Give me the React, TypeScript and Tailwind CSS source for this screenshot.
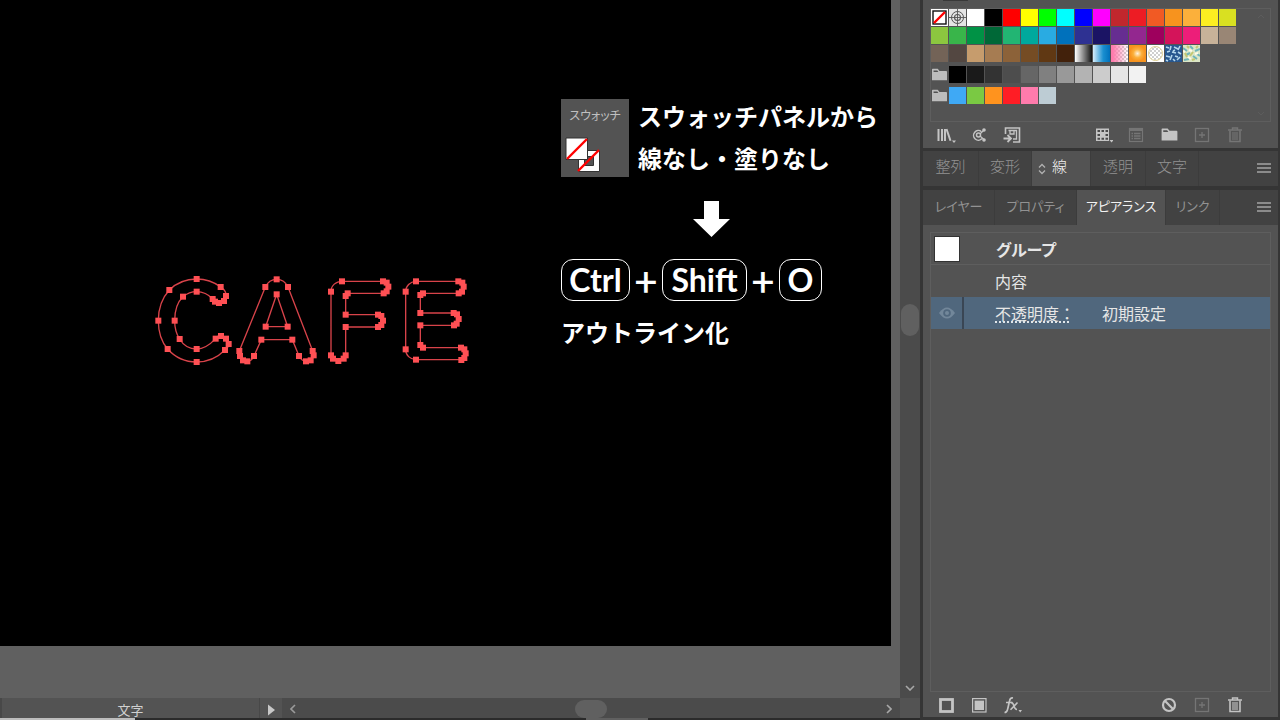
import React, { useState } from 'react';
import { clsx } from 'clsx';

const JP = "font-['Noto_Sans_CJK_JP',sans-serif]";

type Pt = [number, number];

// outlines and anchor points, drawn at 3 units per pixel
const OUTLINES = [
  'M140 27C167 27 192 36 212 51C224 58 230 70 228 78C228 88 222 96 207 99C200 100 194 92 188 87C175 73 160 65 140 65C124 65 110 71 99 80C80 98 74 124 74 152C74 174 79 192 89 207C100 226 118 237 140 237C164 237 182 222 197 206C200 199 207 197 213 198C228 202 238 210 236 222C236 230 231 236 225 240C202 263 174 276 140 276C105 276 75 262 53 237C34 215 25 186 25 152C25 116 36 84 58 60C80 38 107 27 140 27Z',
  'M380 28C364 28 353 36 346 51L268 243C264 258 270 272 292 274C302 274 308 267 312 258L334 209H427L447 258C452 267 458 274 468 274C488 272 496 258 488 243L414 51C407 36 396 28 380 28Z',
  'M380 73L347 170H413Z',
  'M576 34H698C722 36 722 68 698 70H602C592 70 587 70 587 79V134H684C704 137 704 169 684 171H587V256C585 278 545 278 543 256V65C543 46 558 34 576 34Z',
  'M798 34H927C947 37 947 67 927 70H819C814 70 811 70 811 76V129H912C932 132 932 163 912 166H811V225C811 231 814 233 819 233H935C953 236 953 267 934 269H798C780 268 767 256 767 238V65C767 48 780 35 798 34Z',
];

const ANCHORS: Pt[] = [
  [140, 27], [212, 51], [228, 78], [222, 93], [207, 99], [195, 95], [188, 87], [140, 65], [99, 80], [74, 152], [89, 207],
  [140, 237], [197, 206], [213, 198], [228, 206], [236, 222], [225, 240], [140, 276], [53, 237], [25, 152], [58, 60],
  [380, 28], [346, 51], [414, 51], [380, 73], [347, 170], [413, 170], [334, 209], [427, 209],
  [268, 243], [270, 258], [279, 271], [292, 274], [312, 258], [447, 258], [468, 274], [482, 271], [491, 256], [488, 243],
  [576, 34], [543, 65], [699, 34], [710, 38], [715, 50], [710, 64], [701, 70], [593, 70], [587, 78], [587, 134],
  [684, 134], [694, 138], [699, 152], [694, 165], [684, 171], [587, 171], [587, 256], [581, 266], [565, 273], [549, 266], [543, 256],
  [798, 34], [767, 65], [925, 34], [937, 38], [941, 50], [936, 65], [926, 70], [819, 70], [811, 75], [811, 129],
  [911, 129], [921, 133], [926, 147], [920, 161], [912, 166], [811, 166], [811, 225], [819, 233],
  [933, 233], [943, 238], [947, 250], [943, 264], [934, 270], [798, 269], [767, 238],
];

const ROW_1 = [
  'none', 'registration', '#ffffff', '#000000', '#ff0000', '#ffff00', '#00ff00', '#00ffff', '#0000ff', '#ff00ff',
  '#c1272d', '#ed1c24', '#f15a24', '#f7931e', '#fbb03b', '#fcee21', '#d9e021',
];
const ROW_2 = [
  '#8cc63f', '#39b54a', '#009245', '#006837', '#22b573', '#00a99d', '#29abe2', '#0071bc', '#2e3192', '#1b1464',
  '#662d91', '#93278f', '#9e005d', '#d4145a', '#ed1e79', '#c7b299', '#998675',
];
const ROW_3 = [
  '#736357', '#534741', '#c69c6d', '#a67c52', '#8c6239', '#754c24', '#603813', '#42210b',
  'linear-gradient(90deg,#fff,#111)', 'linear-gradient(90deg,#d5ecfa,#1a8fd0 60%,#0071bc)', 'fade',
  'radial-gradient(circle,#fff3dc,#fbb03b 35%,#f7931e 65%)', 'ring', 'leaves', 'flowers',
];
const GRAYS = ['#000000', '#1a1a1a', '#333333', '#4d4d4d', '#666666', '#808080', '#999999', '#b3b3b3', '#cccccc', '#e6e6e6', '#f2f2f2'];
const BRIGHTS = ['#3fa9f5', '#7ac943', '#ff931e', '#ff1d25', '#ff7bac', '#bdccd4'];

const Checker: React.FC = () => (
  <>
    {Array.from({ length: 64 }, (_, i) => {
      const x = i % 8;
      const y = Math.floor(i / 8);
      return (x + y) % 2 ? <rect key={i} x={x * 2 + 1} y={y * 2 + 1} width="2" height="2" fill="#cfcfcf" /> : null;
    })}
  </>
);

const SwatchArt: React.FC<{ kind: string }> = ({ kind }) => (
  <svg viewBox="0 0 17 17" className="block size-full">
    {kind === 'none' && (
      <>
        <rect width="17" height="17" fill="#fff" />
        <rect x="2" y="2" width="13" height="13" fill="#fff" stroke="#111" strokeWidth="1.4" />
        <path d="M3 14L14 3" stroke="#f00" strokeWidth="2.4" />
      </>
    )}
    {kind === 'registration' && (
      <>
        <rect width="17" height="17" fill="#e4e4e4" />
        <g fill="none" stroke="#555">
          <circle cx="8.5" cy="8.5" r="6" strokeWidth="1" />
          <circle cx="8.5" cy="8.5" r="3" strokeWidth="1.1" />
          <path d="M8.5 0V17M0 8.5H17" strokeWidth="0.9" />
        </g>
      </>
    )}
    {kind === 'fade' && (
      <>
        <defs>
          <linearGradient id="pinkFade">
            <stop offset="0.1" stopColor="#ff7bac" />
            <stop offset="1" stopColor="#ff7bac" stopOpacity="0" />
          </linearGradient>
        </defs>
        <rect width="17" height="17" fill="#fff" />
        <Checker />
        <rect width="17" height="17" fill="url(#pinkFade)" />
      </>
    )}
    {kind === 'ring' && (
      <>
        <rect width="17" height="17" fill="#fff" />
        <Checker />
        <path fill="#fff" fillRule="evenodd" d="M0 0H17V17H0ZM8.5 1.5A7 7 0 1 0 8.5 15.5A7 7 0 1 0 8.5 1.5Z" />
        <circle cx="8.5" cy="8.5" r="7" fill="none" stroke="#e0d08c" strokeWidth="1" />
      </>
    )}
    {kind === 'leaves' && (
      <>
        <rect width="17" height="17" fill="#27578f" />
        <path
          d="M1 2l3 1M6 1l-1 4M9 2l4 2M15 1l-2 4M2 7l3-1M7 7l4 1M13 7l3 2M1 11l4 1M7 10l-2 5M10 11l3 1M15 12l-3 3M8 14l2 2M1 15l2 1M10 5l-2 1"
          stroke="#b4d7ec"
          strokeWidth="1.6"
        />
      </>
    )}
    {kind === 'flowers' && (
      <>
        <rect width="17" height="17" fill="#dce6c6" />
        <path d="M0 3l4 3M7 1l3 3M12 6l5-2M3 10l4-2M10 11l4 3M1 15l5-1M14 9l3 2" stroke="#6fb5b9" strokeWidth="2" />
        <path d="M4 1l2 2M10 7l-3 4M15 1l-2 2M2 8l2 4M9 15l3-1" stroke="#c3c873" strokeWidth="2" />
        <path d="M6 5l3 1M12 9l3-1M5 12l3 2M0 6l2 1" stroke="#fffbe8" strokeWidth="2" />
      </>
    )}
  </svg>
);

const Swatch: React.FC<{ fill: string }> = ({ fill }) => {
  const plain = fill.startsWith('#') || fill.includes('gradient');
  return (
    <button aria-label={fill} className="size-[17px] shrink-0" style={plain ? { background: fill } : undefined}>
      {!plain && <SwatchArt kind={fill} />}
    </button>
  );
};

const Folder: React.FC<{ className: string }> = ({ className }) => (
  <svg viewBox="0 0 17 14" className={className} fill="currentColor">
    <path d="M0 1.2Q0 .5 .8 .5H6.5L8.5 3H16Q17 3 17 4V13.5H0Z" />
    <path d="M1.8 2.5H6L7.2 4.2H1.8Z" fill="#535353" />
  </svg>
);

const SwatchRow: React.FC<{ items: string[]; folder?: boolean }> = ({ items, folder }) => (
  <div className="flex gap-px items-center">
    {folder && (
      <button aria-label="folder" className="grid place-items-center size-[17px]">
        <Folder className="w-[15px] h-[13px] text-[#bdbdbd]" />
      </button>
    )}
    {items.map((fill) => (
      <Swatch key={fill} fill={fill} />
    ))}
  </div>
);

const IconButton: React.FC<{ label: string; dim?: boolean; children: React.ReactNode }> = ({ label, dim, children }) => (
  <button aria-label={label} className={clsx('block size-5 shrink-0', dim ? 'text-[#757575]' : 'text-[#c4c4c4]')}>
    <svg viewBox="0 0 20 20" className="block size-5" fill="none" stroke="currentColor">
      {children}
    </svg>
  </button>
);

const TrashArt = () => (
  <>
    <path d="M3 5H17M7.500 5V3H12.500V5" strokeWidth="1.400" />
    <path d="M5 5.500V16.500H15V5.500" strokeWidth="1.600" />
    <path d="M8 7V15M10 7V15M12 7V15" strokeWidth="1.100" />
  </>
);

const PlusArt = () => (
  <>
    <rect x="3.500" y="3.500" width="13" height="13" strokeWidth="1.300" />
    <path d="M10 7V13M7 10H13" strokeWidth="1.300" />
  </>
);

const TabBar: React.FC<{
  tabs: { name: string; width: string }[];
  initial: string;
  textSize: string;
  sortable?: boolean;
}> = ({ tabs, initial, textSize, sortable }) => {
  const [active, setActive] = useState(initial);
  return (
    <div className="flex h-[35px] bg-[#424242]">
      {tabs.map(({ name, width }) => (
        <button
          key={name}
          onClick={() => setActive(name)}
          className={clsx(
            'flex items-center justify-center gap-[6px] pb-1 border-r border-[#3c3c3c] whitespace-nowrap [font-feature-settings:"palt"]',
            width,
            textSize,
            active === name ? 'bg-[#535353] text-[#f2f2f2]' : 'text-[#929292]',
          )}
        >
          {sortable && active === name && (
            <svg viewBox="0 0 8 12" className="w-2 h-3 mt-1" fill="none" stroke="#b0b0b0" strokeWidth="1.300">
              <path d="M1 4.500L4 1.500L7 4.500M1 7.500L4 10.500L7 7.500" />
            </svg>
          )}
          {name}
        </button>
      ))}
      <button aria-label="menu" className="ml-auto mr-[7px] pb-px self-center">
        <svg viewBox="0 0 14 10" className="w-[14px] h-[10px] block" stroke="#a4a4a4" strokeWidth="1.400">
          <path d="M0 1H14M0 5H14M0 9H14" />
        </svg>
      </button>
    </div>
  );
};

const SwatchesPanel = () => (
  <section className="bg-[#535353] px-[7px] pb-[3px]">
    <div className="ml-[13px] w-[25px] h-px bg-[#383838]" />
    <div className="mt-[7px] h-[114px] border border-[#5e5e5e] flex justify-between">
      <div className="space-y-[4px]">
        <div className="space-y-px">
          <SwatchRow items={ROW_1} />
          <SwatchRow items={ROW_2} />
          <SwatchRow items={ROW_3} />
        </div>
        <SwatchRow folder items={GRAYS} />
        <SwatchRow folder items={BRIGHTS} />
      </div>
      <svg viewBox="0 0 8 112" className="w-2 h-[112px] mr-[5px]" fill="none" stroke="#5c5c5c">
        <path d="M1 9L4 6L7 9M1 103L4 106L7 103" />
      </svg>
    </div>
    <div className="flex items-center justify-between h-[23px] pt-[2px] pl-[6px] pr-[26px]">
      <div className="flex gap-[13px]">
        <IconButton label="libraries">
          <path d="M2.500 4V16M6 4V16M9 4V16" strokeWidth="2" />
          <path d="M10.500 4L14.500 15.700" strokeWidth="2" />
          <path d="M16 15.500H20L18 18Z" fill="currentColor" stroke="none" />
        </IconButton>
        <IconButton label="themes">
          <path d="M13 13.500A4.800 4.800 0 1 1 12.500 6.700" strokeWidth="1.500" />
          <circle cx="9.500" cy="10" r="2" strokeWidth="1.500" />
          <path d="M11 9L15 5M11 11L15 14.500" strokeWidth="1.100" />
          <circle cx="15" cy="5" r="1.800" fill="currentColor" stroke="none" />
          <circle cx="15" cy="15" r="1.800" fill="currentColor" stroke="none" />
        </IconButton>
        <IconButton label="add to library">
          <path d="M3.500 9V3H17.500V17H11" strokeWidth="1.600" />
          <path d="M6.500 5.500H14.500V14H11M8 5.500V9H12V5.500" strokeWidth="1.300" />
          <path d="M1.500 13.500H8M5.500 10L9 13.500L5.500 17" strokeWidth="1.800" />
        </IconButton>
      </div>
      <div className="flex gap-[13px]">
        <IconButton label="swatch kinds">
          <rect x="3" y="3.500" width="13" height="12.500" fill="currentColor" stroke="none" />
          <path
            d="M4.500 6H7M8.500 6H11M12.500 6H15M4.500 10H7M12.500 10H15M4.500 13.700H7M8.500 13.700H11M12.500 13.700H15"
            stroke="#4a4a4a"
            strokeWidth="2"
          />
          <path d="M16.500 15H20.500L18.500 17.500Z" fill="currentColor" stroke="none" />
        </IconButton>
        <IconButton label="options" dim>
          <rect x="3.500" y="3.500" width="13" height="13" strokeWidth="1.200" />
          <path d="M3.500 5H16.500" strokeWidth="2" />
          <path d="M5.500 8.500H7M8 8.500H14.500M5.500 11H7M8 11H14.500M5.500 13.500H7M8 13.500H14.500" strokeWidth="1.300" />
        </IconButton>
        <button aria-label="new group" className="grid place-items-center size-5">
          <Folder className="w-[17px] h-[13px] text-[#c4c4c4]" />
        </button>
        <IconButton label="new swatch" dim><PlusArt /></IconButton>
        <IconButton label="delete" dim><TrashArt /></IconButton>
      </div>
    </div>
  </section>
);

const AppearancePanel = () => (
  <section className="flex-1 flex flex-col bg-[#535353] px-[7px] pt-[7px]">
    <div className="flex-1 border border-[#5e5e5e] text-base leading-none text-[#e6e6e6]">
      <div className="flex items-center h-8 border-b border-[#5e5e5e]">
        <span className="ml-[3px] size-[26px] bg-white border border-[#333]" />
        <strong className='ml-9 font-bold [font-feature-settings:"palt"]'>グループ</strong>
      </div>
      <div className="flex items-center h-8 pl-16">内容</div>
      <div className="flex items-center h-8 bg-[#50677d]">
        <button aria-label="visibility" className="w-[33px] h-8 grid place-items-center border-r-2 border-[#3a4654]">
          <svg viewBox="0 0 16 12" className="w-4 h-3">
            <path d="M0 6Q8-5 16 6Q8 17 0 6Z" fill="#72879a" />
            <circle cx="8" cy="6" r="3.800" fill="#50677d" />
            <circle cx="8" cy="6" r="2" fill="#72879a" />
          </svg>
        </button>
        <a href="#opacity" className="ml-[31px] mt-[2px] w-[74px] whitespace-nowrap border-b-2 border-dotted border-[#dfe5ea]">不透明度：</a>
        <span className="ml-[33px]">初期設定</span>
      </div>
    </div>
    <div className="flex items-center justify-between h-[25px] pt-px pl-[6px] pr-[26px]">
      <div className="flex gap-[13px]">
        <IconButton label="new stroke">
          <rect x="4.500" y="4.500" width="12" height="12" strokeWidth="2.800" />
        </IconButton>
        <IconButton label="new fill">
          <rect x="3.600" y="3.600" width="13.400" height="13.400" strokeWidth="1.200" />
          <rect x="5.600" y="5.600" width="9.400" height="9.400" fill="currentColor" stroke="none" />
        </IconButton>
        <IconButton label="effects">
          <path d="M2.500 17.500Q5 17.500 5.800 13.500L7.500 6Q8.200 2.500 11 3M4 7.500H10.500" strokeWidth="1.700" />
          <path d="M9 7.500Q11 7.500 12 11Q13 14.500 15 14.500M15.500 7.500L8.500 14.700" strokeWidth="1.600" />
          <path d="M16.500 15H20L18.200 17.500Z" fill="currentColor" stroke="none" />
        </IconButton>
      </div>
      <div className="flex gap-[13px]">
        <IconButton label="clear">
          <circle cx="10" cy="10" r="6" strokeWidth="2.200" />
          <path d="M5.800 5.800L14.200 14.200" strokeWidth="2.200" />
        </IconButton>
        <IconButton label="duplicate" dim><PlusArt /></IconButton>
        <IconButton label="delete"><TrashArt /></IconButton>
      </div>
    </div>
  </section>
);

const Key: React.FC<{ width: string; children: string }> = ({ width, children }) => (
  <kbd
    className={clsx(
      width,
      "font-[Lato,'Noto_Sans_CJK_JP',sans-serif] h-[42px] flex items-center justify-center rounded-xl border border-white text-[32px] leading-none font-bold",
    )}
  >
    {children}
  </kbd>
);

const Plus = () => <span className="w-8 text-center text-[40px] leading-[42px] h-[42px] font-medium">+</span>;

const Instructions = () => (
  <div className="text-white text-2xl font-bold whitespace-nowrap">
    <div className="flex gap-[9px]">
      <div className="w-[68px] h-[78px] bg-[#535353] pt-2 text-center">
        <p className='text-xs leading-4 font-normal text-[#c0c0c0] [font-feature-settings:"palt"]'>スウォッチ</p>
        <svg viewBox="0 0 36 36" className="size-9 mt-[14px] ml-1">
          <path d="M13.500 13.500H34.500V34.500H13.500Z" fill="#fff" stroke="#333" />
          <path d="M19.500 19.500H28.500V28.500H19.500Z" fill="#535353" stroke="#333" />
          <path d="M13 34L34 13" stroke="#f00" strokeWidth="2.400" />
          <path d="M1 1H22.500V22.500H1Z" fill="#fff" stroke="#333" />
          <path d="M2 22L22 2" stroke="#f00" strokeWidth="2.400" />
        </svg>
      </div>
      <p className="leading-[42px] -mt-1 -mb-px">
        スウォッチパネルから
        <br />
        線なし・塗りなし
      </p>
    </div>
    <svg viewBox="0 0 37 36" className="w-[37px] h-9 ml-[132px] mt-[23px]" fill="#fff">
      <path d="M11 0H26V18H37L18.500 36L0 18H11Z" />
    </svg>
    <div className="flex items-center mt-[22px]">
      <Key width="w-[69px]">Ctrl</Key>
      <Plus />
      <Key width="w-[85px]">Shift</Key>
      <Plus />
      <Key width="w-[43px]">O</Key>
    </div>
    <p className="mt-[15px] leading-8">アウトライン化</p>
  </div>
);

const Workspace = () => (
  <main className="flex-1 min-w-0 flex flex-col">
    <div className="flex-1 flex bg-[#606060]">
      <div className="flex-1 mr-[9px] mb-[52px] bg-black flex items-start pl-[150px] pt-[99px]">
        <svg viewBox="0 0 990 300" className="w-[330px] h-[100px] shrink-0 mt-[171px] mr-[81px]">
          <g fill="none" stroke="#d8434a" strokeWidth="4">
            {OUTLINES.map((d) => (
              <path key={d} d={d} />
            ))}
          </g>
          {ANCHORS.map(([x, y]) => (
            <rect key={`${x}-${y}`} x={x - 9} y={y - 9} width="18" height="18" fill="#ff5054" />
          ))}
        </svg>
        <Instructions />
      </div>
      <div className="w-5 bg-[#4b4b4b] flex flex-col items-center">
        <div className="flex-1 flex items-center">
          <div className="w-[18px] h-8 rounded-full bg-[#606060] -mt-[46px]" />
        </div>
        <svg viewBox="0 0 10 6" className="w-[10px] h-[6px] mb-[7px]" fill="none" stroke="#a8a8a8" strokeWidth="1.600">
          <path d="M1 1L5 5L9 1" />
        </svg>
      </div>
    </div>
    <div className="flex h-5 bg-[#535353] text-[#d0d0d0]">
      <div className="w-[260px] border-l-2 border-r border-[#484848] text-center text-[13px] leading-4 pt-1">文字</div>
      <button aria-label="play" className="w-[22px] grid place-items-center">
        <svg viewBox="0 0 8 12" className="w-2 h-3 mt-1" fill="#c8c8c8">
          <path d="M1 0.500L8 6L1 11.500Z" />
        </svg>
      </button>
      <div className="flex-1 flex items-center justify-between pt-[2px] px-2 bg-[#4b4b4b]">
        <svg viewBox="0 0 6 10" className="w-[6px] h-[10px]" fill="none" stroke="#9a9a9a" strokeWidth="1.600">
          <path d="M5 1L1 5L5 9" />
        </svg>
        <div className="w-8 h-[18px] rounded-full bg-[#606060]" />
        <svg viewBox="0 0 6 10" className="w-[6px] h-[10px]" fill="none" stroke="#a8a8a8" strokeWidth="1.600">
          <path d="M1 1L5 5L1 9" />
        </svg>
      </div>
      <div className="w-5" />
    </div>
    <div className="flex h-[2px] bg-[#2b2b2b]">
      <div className="w-[135px] bg-[#bdbdbd]" />
      <div className="ml-[451px] w-[62px] bg-[#606060]" />
    </div>
  </main>
);

export default function App() {
  return (
    <div className={clsx(JP, 'flex min-h-screen bg-[#353535]')}>
      <Workspace />
      <aside className="w-[360px] shrink-0 flex flex-col pl-[3px] pr-[2px] pb-[3px]">
        <SwatchesPanel />
        <div className="mt-[3px]">
          <TabBar
            initial="線"
            textSize="text-[15px] font-light"
            sortable
            tabs={[
              { name: '整列', width: 'w-[56px]' },
              { name: '変形', width: 'w-[53px]' },
              { name: '線', width: 'w-[59px] pr-[17px]' },
              { name: '透明', width: 'w-[55px]' },
              { name: '文字', width: 'w-[53px]' },
            ]}
          />
        </div>
        <div className="mt-1">
          <TabBar
            initial="アピアランス"
            textSize="text-[13px] font-normal"
            tabs={[
              { name: 'レイヤー', width: 'w-[72px]' },
              { name: 'プロパティ', width: 'w-[82px]' },
              { name: 'アピアランス', width: 'w-[89px]' },
              { name: 'リンク', width: 'w-[54px]' },
            ]}
          />
        </div>
        <AppearancePanel />
      </aside>
    </div>
  );
}
